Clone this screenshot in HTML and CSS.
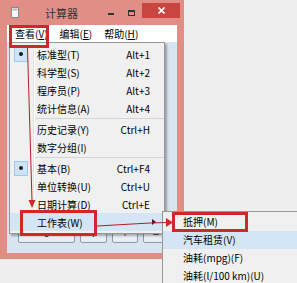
FILE: index.html
```html
<!DOCTYPE html>
<html lang="zh-CN">
<head>
<meta charset="utf-8">
<title>计算器</title>
<link rel="stylesheet" href="styles.css">
</head>
<body>
<div class="window">
  <div class="titlebar">
    <svg class="app-icon" width="8" height="11" viewBox="0 0 8 11"><rect x="0.5" y="0.5" width="7" height="10" fill="#f7f7f7" stroke="#8a8a8a"/><rect x="1.5" y="1.5" width="5" height="2" fill="#b9b9b9"/></svg>
    <span class="title">计算器</span>
    <span class="ctrl-min"></span>
    <span class="ctrl-max"></span>
    <span class="ctrl-close"><svg width="7" height="7" viewBox="0 0 7 7"><path d="M0.5 0.5L6.5 6.5M6.5 0.5L0.5 6.5" stroke="#fff" stroke-width="1.6"/></svg></span>
  </div>
  <div class="frame-body">
    <div class="menubar">
      <span class="mb-item">查看(<u>V</u>)</span>
      <span class="mb-item">编辑(<u>E</u>)</span>
      <span class="mb-item">帮助(<u>H</u>)</span>
    </div>
    <div class="client">
      <div class="keys">
        <span class="calc-key k-wide">0</span>
        <span class="calc-key k-mid">.</span>
        <span class="calc-key">+</span>
        <span class="calc-key">=</span>
      </div>
    </div>
  </div>
</div>

<div class="menu view-menu">
  <div class="item"><span class="gut"><span class="check"><span class="dot"></span></span></span><span class="label">标准型(T)</span><span class="accel">Alt+1</span></div>
  <div class="item"><span class="gut"></span><span class="label">科学型(S)</span><span class="accel">Alt+2</span></div>
  <div class="item"><span class="gut"></span><span class="label">程序员(P)</span><span class="accel">Alt+3</span></div>
  <div class="item"><span class="gut"></span><span class="label">统计信息(A)</span><span class="accel">Alt+4</span></div>
  <div class="sep"></div>
  <div class="item"><span class="gut"></span><span class="label">历史记录(Y)</span><span class="accel">Ctrl+H</span></div>
  <div class="item"><span class="gut"></span><span class="label">数字分组(I)</span></div>
  <div class="sep"></div>
  <div class="item"><span class="gut"><span class="check"><span class="dot"></span></span></span><span class="label">基本(B)</span><span class="accel">Ctrl+F4</span></div>
  <div class="item"><span class="gut"></span><span class="label">单位转换(U)</span><span class="accel">Ctrl+U</span></div>
  <div class="item"><span class="gut"></span><span class="label">日期计算(D)</span><span class="accel">Ctrl+E</span></div>
  <div class="item hot"><span class="gut"></span><span class="label">工作表(W)</span><span class="sub-arrow"></span></div>
</div>

<div class="menu sub-menu">
  <div class="sitem">抵押(M)</div>
  <div class="sitem hot">汽车租赁(V)</div>
  <div class="sitem">油耗(mpg)(F)</div>
  <div class="sitem">油耗(l/100 km)(U)</div>
</div>

<svg class="annot" width="297" height="283" viewBox="0 0 297 283">
  <rect x="10.5" y="26.5" width="37" height="20" fill="none" stroke="#d3262b" stroke-width="3"/>
  <rect x="21.5" y="211.5" width="74" height="23" fill="none" stroke="#d3262b" stroke-width="3"/>
  <rect x="173.5" y="213.5" width="73" height="17" fill="none" stroke="#d3262b" stroke-width="3"/>
  <path d="M27.5 48 L32 201" stroke="#b21d22" stroke-width="1" fill="none"/>
  <polygon points="28.5,200 35.5,200 32,208" fill="#d3262b"/>
  <path d="M97 226 L150 223 L167 222.5" stroke="#b21d22" stroke-width="1" fill="none"/>
  <polygon points="166,218 166,227 173,222.5" fill="#d3262b"/>
</svg>
</body>
</html>
```

FILE: styles.css
```css
html, body {
  margin: 0;
  padding: 0;
}
body {
  width: 297px;
  height: 283px;
  overflow: hidden;
  position: relative;
  background: #eeeeee;
  font-family: "Noto Sans CJK SC", "Noto Sans", sans-serif;
  font-size: 10px;
  color: #000;
}
.window {
  width: 184px;
  height: 259px;
  background: #e08e86;
  display: flex;
  flex-direction: column;
}
.titlebar {
  height: 25px;
  display: flex;
  align-items: center;
  flex: none;
}
.app-icon {
  margin-left: 11px;
  flex: none;
}
.title {
  margin-left: 26px;
  font-size: 11px;
  color: #333;
}
.ctrl-min {
  margin-left: auto;
  width: 6px;
  height: 2px;
  background: #333;
  margin-top: 3px;
}
.ctrl-max {
  margin-left: 14px;
  width: 7px;
  height: 6px;
  box-sizing: border-box;
  border: 1px solid #333;
  border-top-width: 2px;
}
.ctrl-close {
  align-self: flex-start;
  margin-top: 3px;
  margin-left: 7px;
  margin-right: 4px;
  width: 38px;
  height: 15px;
  background: #c8463f;
  display: flex;
  align-items: center;
  justify-content: center;
}
.frame-body {
  flex: 1;
  margin: 0 7px 6px 7px;
  display: flex;
  flex-direction: column;
}
.menubar {
  height: 17px;
  flex: none;
  background: #ffffff;
  display: flex;
  align-items: center;
  padding-left: 2px;
}
.mb-item {
  padding: 0 6px;
  line-height: 17px;
}
.client {
  flex: 1;
  background: #d9e4f1;
  display: flex;
  flex-direction: column;
  justify-content: flex-end;
  padding: 0 0 10px 11px;
}
.keys {
  display: flex;
  gap: 5px;
  height: 24px;
}
.calc-key {
  box-sizing: border-box;
  width: 26px;
  height: 24px;
  border: 1px solid #8d9bab;
  border-radius: 2px;
  background: linear-gradient(#fbfcfd, #e6ecf3);
  display: flex;
  align-items: center;
  justify-content: center;
  font-size: 12px;
  color: #333;
}
.k-wide { width: 57px; }
.k-mid { width: 27px; }

.menu {
  position: absolute;
  box-sizing: border-box;
  border: 1px solid #979797;
  box-shadow: 2px 2px 2px rgba(0, 0, 0, 0.3);
}
.view-menu {
  left: 9px;
  top: 42px;
  width: 156px;
  padding: 2px 0;
  background: linear-gradient(to right, #f0f0f0 0 23px, #e2e3e3 23px 24px, #ffffff 24px 25px, #f0f0f0 25px);
}
.item {
  height: 18px;
  display: flex;
  align-items: center;
}
.gut {
  width: 22px;
  height: 18px;
  flex: none;
  display: flex;
  align-items: center;
  justify-content: center;
}
.check {
  box-sizing: border-box;
  width: 14px;
  height: 15px;
  background: #cde3f6;
  border: 1px solid #a3c8ec;
  display: flex;
  align-items: center;
  justify-content: center;
}
.dot {
  width: 4px;
  height: 4px;
  border-radius: 50%;
  background: #1a1a1a;
}
.label {
  margin-left: 5px;
  flex: 1;
  white-space: nowrap;
}
.accel {
  margin-right: 14px;
  white-space: nowrap;
}
.sep {
  height: 1px;
  margin: 1px 0 1px 25px;
  background: #d5d5d5;
}
.item.hot {
  background: #d4e5f6;
}
.sub-arrow {
  width: 0;
  height: 0;
  border-left: 4px solid #222;
  border-top: 3.5px solid transparent;
  border-bottom: 3.5px solid transparent;
  margin-right: 8px;
}
.sub-menu {
  left: 162px;
  top: 211px;
  width: 135px;
  height: 72px;
  padding-top: 1px;
  border-right: none;
  border-bottom: none;
  overflow: hidden;
  background: #f0f0f0;
}
.sitem {
  height: 18px;
  line-height: 18px;
  padding-left: 20px;
  white-space: nowrap;
}
.sitem.hot {
  background: #d4e5f6;
}
.annot {
  position: absolute;
  left: 0;
  top: 0;
  pointer-events: none;
}
```
